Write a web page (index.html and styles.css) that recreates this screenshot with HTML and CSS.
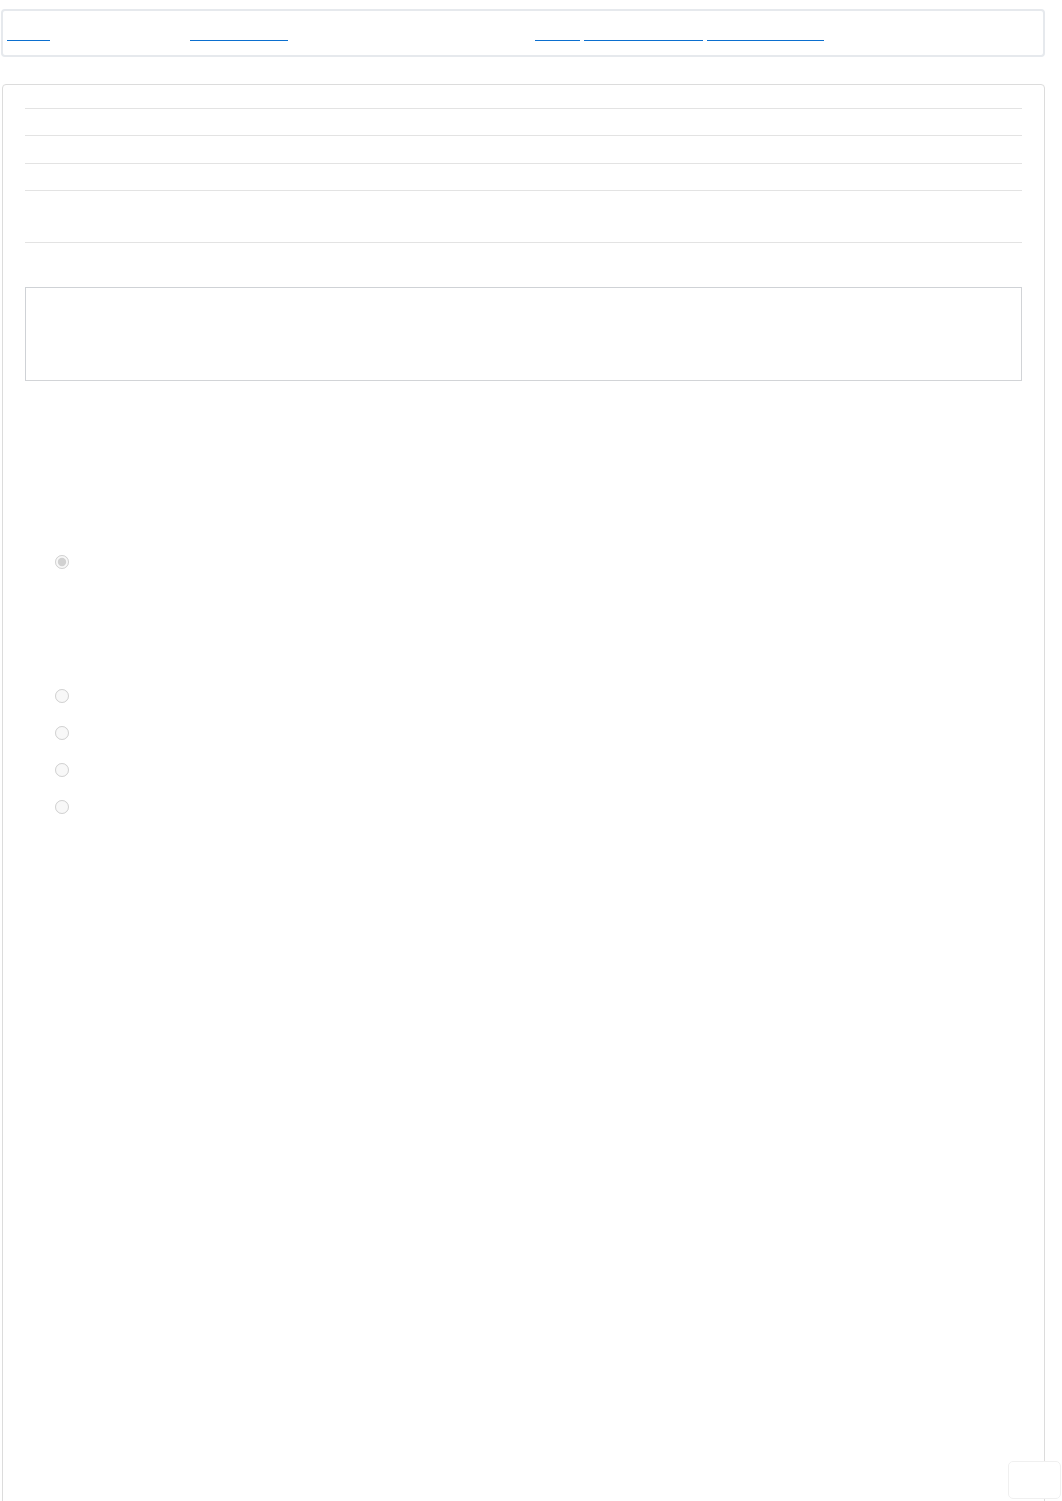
FILE: index.html
```html
<!DOCTYPE html>
<html lang="en">
<head>
<meta charset="utf-8">
<title>Page</title>
<link rel="stylesheet" href="styles.css">
</head>
<body>
<nav class="topbar">
  <div class="nav-cell nav-home"><a class="lnk w43" href="#">Home</a></div>
  <div class="nav-cell nav-mid"><a class="lnk w98" href="#">Section</a></div>
  <div class="nav-cell nav-right">
    <a class="lnk w45" href="#">Help</a>
    <a class="lnk w119" href="#">Preferences</a>
    <a class="lnk w117" href="#">Sign out</a>
  </div>
</nav>

<main class="card">
  <div class="rows">
    <div class="row r27"><span class="hid">Row</span></div>
    <div class="row r28"><span class="hid">Row</span></div>
    <div class="row r27"><span class="hid">Row</span></div>
    <div class="row r52"><span class="hid">Row</span></div>
  </div>

  <div class="well"><span class="hid">Notes</span></div>

  <div class="choices">
    <label class="choice first"><input type="radio" name="c1" checked disabled><span class="hid">Option</span></label>
    <div class="group">
      <label class="choice"><input type="radio" name="c2" disabled><span class="hid">Option</span></label>
      <label class="choice"><input type="radio" name="c2" disabled><span class="hid">Option</span></label>
      <label class="choice"><input type="radio" name="c2" disabled><span class="hid">Option</span></label>
      <label class="choice"><input type="radio" name="c2" disabled><span class="hid">Option</span></label>
    </div>
  </div>
</main>

<div class="floater" aria-hidden="true"></div>
</body>
</html>
```

FILE: styles.css
```css
* { box-sizing: border-box; }

html, body {
  margin: 0;
  padding: 0;
  background: #ffffff;
  font-family: "Open Sans", "Liberation Sans", Arial, sans-serif;
  font-size: 13px;
}

.topbar {
  display: flex;
  margin: 9px 0 0 1px;
  width: 1044px;
  height: 48px;
  border: 2px solid #e6e9ed;
  border-radius: 4px;
  padding: 0 0 0 4px;
  align-items: flex-start;
}

.nav-cell {
  display: flex;
  height: 30px;
  align-items: flex-end;
}

.nav-home { width: 183px; }
.nav-mid { width: 345px; }
.nav-right { gap: 4px; }

.lnk {
  display: inline-block;
  height: 30px;
  border-bottom: 1px solid #0b6fcf;
  color: transparent;
  text-decoration: none;
  overflow: hidden;
  white-space: nowrap;
  font-size: 13px;
  line-height: 29px;
}

.w43 { width: 43px; }
.w98 { width: 98px; }
.w45 { width: 45px; }
.w119 { width: 119px; }
.w117 { width: 117px; }

.card {
  display: block;
  margin: 27px 0 0 2px;
  width: 1043px;
  min-height: 1440px;
  border: 1px solid #dcdcdc;
  border-radius: 4px 4px 0 0;
  padding: 23px 22px 0 22px;
}

.rows {
  border-bottom: 1px solid #e3e3e3;
}

.row {
  border-top: 1px solid #e3e3e3;
}

.r27 { height: 27px; }
.r28 { height: 28px; }
.r52 { height: 52px; }

.hid {
  color: transparent;
}

.well {
  margin-top: 44px;
  height: 94px;
  border: 1px solid #d2d4d7;
  border-top-color: #cfd2d6;
  border-left-color: #cfd2d6;
  background: #ffffff;
}

.choices {
  padding-top: 174px;
  padding-left: 30px;
}

.choice {
  display: flex;
  align-items: flex-start;
  height: 37px;
}

.choice input {
  margin: 0;
  width: 14px;
  height: 14px;
}

.choice .hid {
  margin-left: 8px;
  line-height: 14px;
}

.group {
  margin-top: 97px;
}

.floater {
  position: fixed;
  right: 1px;
  bottom: 2px;
  width: 53px;
  height: 38px;
  border: 1px solid #f0f0f0;
  border-radius: 5px;
  background: #ffffff;
}
```
